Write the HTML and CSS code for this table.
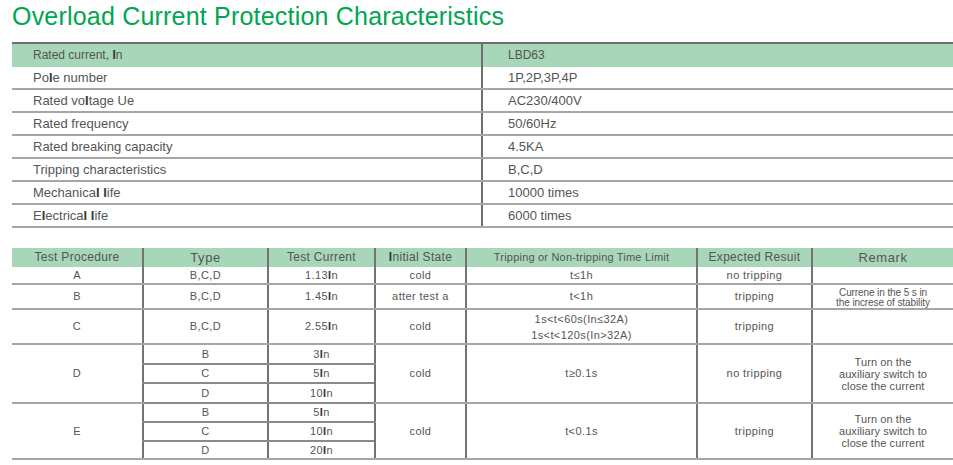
FILE: index.html
```html
<!DOCTYPE html>
<html>
<head>
<meta charset="utf-8">
<link rel="stylesheet" href="styles.css">
</head>
<body>
<h1 class="title">Overload Current Protection Characteristics</h1>
<table class="spec">
  <colgroup><col class="spec-c1"><col class="spec-c2"></colgroup>
  <tr class="head"><td>Rated current, <b>I</b>n</td><td>LBD63</td></tr>
  <tr><td>Po<b>l</b>e number</td><td>1P,2P,3P,4P</td></tr>
  <tr><td>Rated vo<b>l</b>tage Ue</td><td>AC230/400V</td></tr>
  <tr><td>Rated frequency</td><td>50/60Hz</td></tr>
  <tr><td>Rated breaking capacity</td><td>4.5KA</td></tr>
  <tr><td>Tripping characteristics</td><td>B,C,D</td></tr>
  <tr><td>Mechanica<b>l</b> <b>l</b>ife</td><td>10000 times</td></tr>
  <tr><td>E<b>l</b>ectrica<b>l</b> <b>l</b>ife</td><td>6000 times</td></tr>
</table>

<table class="test">
  <colgroup>
    <col class="t1"><col class="t2"><col class="t3"><col class="t4"><col class="t5"><col class="t6"><col class="t7">
  </colgroup>
  <tr class="head">
    <td>Test Procedure</td><td class="wide">Type</td><td>Test Current</td><td><b>I</b>nitial State</td><td class="sm">Tripping or Non-tripping Time Limit</td><td>Expected Resuit</td><td class="wide">Remark</td>
  </tr>
  <tr class="ra">
    <td>A</td><td>B,C,D</td><td>1.13<b>I</b>n</td><td>cold</td><td>t≤1h</td><td>no tripping</td><td></td>
  </tr>
  <tr class="rb">
    <td>B</td><td>B,C,D</td><td>1.45<b>I</b>n</td><td>atter test a</td><td>t&lt;1h</td><td>tripping</td><td class="note">Currene in the 5 s in<br>the increse of stability</td>
  </tr>
  <tr class="rc">
    <td>C</td><td>B,C,D</td><td>2.55<b>I</b>n</td><td>cold</td><td class="two">1s&lt;t&lt;60s(In≤32A)<br>1s&lt;t&lt;120s(In&gt;32A)</td><td>tripping</td><td></td>
  </tr>
  <tr class="rd">
    <td rowspan="3" class="grp">D</td><td>B</td><td>3<b>I</b>n</td><td rowspan="3" class="grp">cold</td><td rowspan="3" class="grp">t≥0.1s</td><td rowspan="3" class="grp">no tripping</td><td rowspan="3" class="grp remark">Turn on the<br>auxiliary switch to<br>close the current</td>
  </tr>
  <tr class="rd mid"><td>C</td><td>5<b>I</b>n</td></tr>
  <tr class="rd"><td>D</td><td>10<b>I</b>n</td></tr>
  <tr class="re">
    <td rowspan="3" class="grp">E</td><td>B</td><td>5<b>I</b>n</td><td rowspan="3" class="grp">cold</td><td rowspan="3" class="grp">t&lt;0.1s</td><td rowspan="3" class="grp">tripping</td><td rowspan="3" class="grp remark">Turn on the<br>auxiliary switch to<br>close the current</td>
  </tr>
  <tr class="re"><td>C</td><td>10<b>I</b>n</td></tr>
  <tr class="re end"><td>D</td><td>20<b>I</b>n</td></tr>
</table>
</body>
</html>
```

FILE: styles.css
```css
html, body {
  margin: 0;
  padding: 0;
  background: #ffffff;
}

body {
  font-family: "Liberation Sans", Arial, sans-serif;
  color: #555555;
  width: 953px;
  overflow: hidden;
}

b {
  font-weight: bold;
  color: #333333;
}

.title {
  margin: 0;
  padding: 2px 0 0 12px;
  height: 40px;
  box-sizing: border-box;
  font-size: 25px;
  line-height: 28px;
  font-weight: normal;
  color: #00a54f;
  letter-spacing: 0.2px;
  white-space: nowrap;
}

table {
  border-collapse: collapse;
  table-layout: fixed;
  margin-left: 12px;
}

/* spec table */
.spec {
  width: 941px;
  margin-top: 2px;
  border-top: 2px solid #6e6e6e;
}

.spec-c1 { width: 470px; }
.spec-c2 { width: 471px; }

.spec td {
  height: 21px;
  padding: 0 0 0 21px;
  font-size: 13px;
  line-height: 15px;
  border-bottom: 2px solid #a6a6a6;
  vertical-align: middle;
  white-space: nowrap;
}

.spec td + td {
  padding-left: 25px;
  border-left: 2px solid #6e6e6e;
}

.spec .head td {
  height: 23px;
  font-size: 12px;
  background: #a8d6b9;
  border-bottom: none;
}

/* test table */
.test {
  width: 941px;
  margin-top: 20px;
}

.t1 { width: 131px; }
.t2 { width: 125px; }
.t3 { width: 107px; }
.t4 { width: 91px; }
.t5 { width: 231px; }
.t6 { width: 115px; }
.t7 { width: 141px; }

.test td {
  padding: 0;
  text-align: center;
  vertical-align: middle;
  font-size: 11px;
  line-height: 13px;
  letter-spacing: 0.4px;
  border-left: 2px solid #737373;
  border-bottom: 2px solid #a6a6a6;
  white-space: nowrap;
}

.test td:first-child {
  border-left: none;
}

.test .rd + .rd td:first-child,
.test .re + .re td:first-child {
  border-left: 2px solid #737373;
}

.test .head td {
  height: 19px;
  background: #a8d6b9;
  border-bottom: none;
  font-size: 12px;
  letter-spacing: 0.3px;
}

.test .head td.wide {
  font-size: 13px;
  letter-spacing: 0.6px;
}

.test .head td.sm {
  font-size: 11px;
  letter-spacing: 0.2px;
}

.test .ra td { height: 16px; }
.test .rb td { height: 21px; }
.test .rc td { height: 33px; }
.test .rd td { height: 18px; border-bottom-color: #8a8a8a; }
.test .rd.mid td { height: 17px; }
.test .re td { height: 17px; border-bottom-color: #8a8a8a; }
.test .re.end td { height: 16px; }
.test .rd td.grp,
.test .re td.grp,
.test .re.end td { border-bottom-color: #a6a6a6; }

.test td.note {
  font-size: 10px;
  line-height: 10px;
  letter-spacing: -0.1px;
  padding-top: 2px;
}

.test td.two {
  line-height: 16px;
}

.test td.remark {
  font-size: 11px;
  line-height: 12px;
  letter-spacing: 0.1px;
}
```
